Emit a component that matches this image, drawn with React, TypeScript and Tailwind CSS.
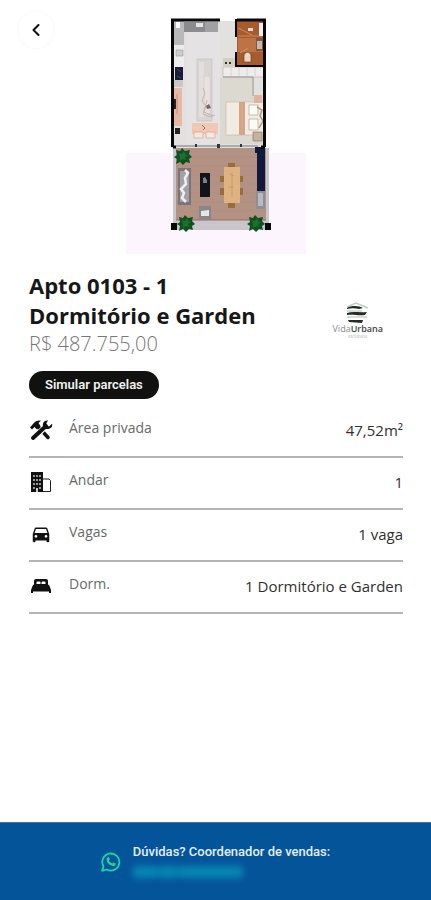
import type { ReactNode } from 'react'
import { MdDirectionsCar } from 'react-icons/md'
import { ChevronLeft } from 'lucide-react'

interface Feature {
  label: string
  value: string
  icon: ReactNode
}

const features: Feature[] = [
  { label: 'Área privada', value: '47,52m²', icon: <ToolsIcon /> },
  { label: 'Andar', value: '1', icon: <BuildingIcon /> },
  { label: 'Vagas', value: '1 vaga', icon: <MdDirectionsCar className="size-[22px]" /> },
  { label: 'Dorm.', value: '1 Dormitório e Garden', icon: <BedIcon /> },
]

function ToolsIcon() {
  return (
    <svg viewBox="0 0 24 24" className="size-6" fill="none" stroke="#111" aria-hidden="true">
      <path d="M1 9.500l3-3.500c2-3 5-4 8-3.500L9.500 5l2 3-3.500 3.500L5.500 9 3 11.500z" fill="#111" stroke="none" />
      <path d="M9 8.500l10 11" strokeWidth="3.500" strokeLinecap="round" />
      <path d="M5 20L17 8" stroke="#fff" strokeWidth="6" />
      <path d="M4 20L17 8" strokeWidth="4" strokeLinecap="round" />
      <path
        d="M19 2.500c-4-.5-6 3-4.800 6 1.300 3 5.800 3.500 8.300.8.700-1 1-2.300.6-3.500L20 8.500 17.500 7V5z"
        fill="#111"
        stroke="none"
      />
    </svg>
  )
}

function BuildingIcon() {
  return (
    <svg viewBox="0 0 20 20" className="size-5" aria-hidden="true">
      <path d="M0 0h12v20H0z" fill="#111" />
      <path
        d="M2 3h2v2H2zM5 3h2v2H5zM8 3h2v2H8zM2 7h2v2H2zM5 7h2v2H5zM8 7h2v2H8zM2 11h2v2H2zM5 11h2v2H5zM8 11h2v2H8zM2 15h2v2H2zM8 15h2v2H8z"
        fill="#999"
      />
      <path d="M12 7h6l1.500 1.500v11H12" fill="#fff" stroke="#222" />
      <path d="M5 16h2v4H5z" fill="#ccc" />
    </svg>
  )
}

function BedIcon() {
  return (
    <svg viewBox="0 0 20 16" className="h-4 w-5" fill="#111" aria-hidden="true">
      <path d="M3 7V3q0-2 2-2h10q2 0 2 2v4z" />
      <path d="M5.500 4.500q0-1 1-1h2q1 0 1 1V6h-4zM10.500 4.500q0-1 1-1h2q1 0 1 1V6h-4z" fill="#fff" />
      <path d="M3 6.500h14q1 0 1.500 1.500l1.500 4v3h-2v-1.500H2V15H0v-3l1.500-4Q2 6.500 3 6.500z" />
    </svg>
  )
}

function Plant({ x, y }: { x: number; y: number }) {
  return (
    <g transform={`translate(${x} ${y})`}>
      <path
        d="M-7-6l4 1 2-3 3 3 5-1-1 4 3 3-3 2 1 4-4-1-3 3-3-3-4 2 1-5-3-2 3-2z"
        fill="#0f5220"
      />
      <path d="M-4-3l3 1 2-3 1 3 3 1-3 2 1 3-3-1-3 2v-3z" fill="#1d7030" />
    </g>
  )
}

function FloorPlan() {
  return (
    <svg
      viewBox="126 18 180 236"
      className="block h-[236px] w-[180px]"
      role="img"
      aria-label="Planta do apartamento"
    >
      <path d="M126 153h180v101H126z" fill="#fcf5fd" />

      {/* living area and bedroom */}
      <path d="M171 19h95v129h-95z" fill="#e3e1e0" />
      <path d="M220 18h15v3h-15z" fill="#fff" />
      <path d="M187 32h33v112h-33z" fill="#e4e2e2" />
      <path d="M220 78h34v22h10v46h-44z" fill="#dcd9d1" />
      <path d="M174 21h10v24h-10z" fill="#b9b9ba" />
      <path d="M176 22h4v6h-4z" fill="#fff" />
      <path d="M184 22h34v10h-34z" fill="#8b8b8e" />
      <path d="M205 22h13v10h-13z" fill="#a1a1a3" />
      <path d="M196 23h7v4h-7z" fill="#e4e4e4" />
      <path d="M174 45h10v22h-10z" fill="#ededee" />
      <path d="M176 50h7v6h-7z" fill="#ccc" stroke="#999" strokeWidth=".6" />
      <path d="M175 67h8v13h-8z" fill="#171b35" />
      <path d="M177 69l4 3m-4 4l4 2" stroke="#4c557b" strokeWidth=".7" />
      <path d="M174 80h9v7h-9z" fill="#c9c7c7" />
      <path d="M174 88h8v38h-8z" fill="#e6b9a5" />
      <path d="M174 99h2v10h-2zM175 128h5v6h-5z" fill="#222" />
      <path d="M177 94v20" stroke="#c08f76" />
      <path d="M197 59h15v62h-15z" fill="#d9d5d5" stroke="#c6c2c2" strokeWidth=".7" />
      <path d="M199 62h5v55h-5z" fill="#e2dede" />
      <path d="M204 76h6v38h-6z" fill="#e8e1de" stroke="#d0c7c4" strokeWidth=".5" />
      <path
        d="M203 88l2 5-3 8 4 5-3 8 7 3 5-2M207 100l-3 12 9 4"
        fill="none"
        stroke="#c3aca0"
        strokeWidth=".8"
      />
      <path d="M206 106l3-2 2 4-4 1z" fill="#75665f" />
      <path d="M192 123h26v11h-26z" fill="#f0c8b3" />
      <path d="M194 132h9v6h-9zM206 132h9v6h-9z" fill="#f8e6dc" stroke="#c69f8a" strokeWidth=".6" />
      <path d="M202 125l3 3-2 2" stroke="#7c5849" fill="none" strokeWidth=".8" />
      <path d="M223 58h12v8h-12z" fill="#d3cfc1" />
      <path d="M225 62h2v2h-2zM229 62h2v2h-2z" fill="#333" />
      <path d="M223 67h41v10h-41z" fill="#efedec" stroke="#b9b5b0" strokeWidth=".7" />
      <path d="M231 68v8m8-8v8m8-8v8m8-8v8" stroke="#c9c4bd" strokeWidth=".6" />
      <path d="M223 77h30v19" fill="none" stroke="#9c9893" />

      {/* bed */}
      <path d="M226 102h38v33h-38z" fill="#f1ece2" stroke="#c1b7a5" strokeWidth=".6" />
      <path d="M239 102h6v33h-6z" fill="#d6a38b" />
      <path d="M249 105h9v10h-9zM249 119h9v11h-9z" fill="#fbfaf8" stroke="#b3a594" strokeWidth=".7" />
      <path d="M257 107l5 3-2 6 3 5-4 7" fill="none" stroke="#ac9582" strokeWidth="1.500" />
      <path d="M254 95h8v8h-8z" fill="#e0b29f" />
      <path d="M253 132h9v9h-9z" fill="#c3b3a0" stroke="#8c7b69" strokeWidth=".7" />

      {/* bathroom */}
      <path d="M237 21h27v44h-27z" fill="#a65c2e" />
      <path d="M238 38h25v14h-25z" fill="#bd7344" />
      <path d="M238 36h24M238 28l14 7M240 53l8-5" stroke="#d09a70" strokeWidth=".8" />
      <path d="M259 23h5v13h-5z" fill="#f3f1ef" />
      <path d="M248 28h5v3h-5z" fill="#ead9ca" />
      <path d="M256 38h7v13h-7z" fill="#7b5b47" />
      <path d="M257 41h5v8h-5z" fill="#c9b8a8" />
      <path d="M244 56c0-5 7-5 7 0v6h-7z" fill="#e7d9c5" stroke="#6d4324" strokeWidth=".7" />
      <path d="M236 37v-17h29v46h-29v-14" fill="none" stroke="#080808" strokeWidth="2" />

      {/* terrace */}
      <path d="M173 148h96v82h-96z" fill="#c8c5cb" />
      <path d="M176 148h90v72h-90z" fill="#b39284" />
      <path
        d="M176 157h90M176 166h90M176 175h90M176 184h90M176 193h90M176 202h90M176 211h90"
        stroke="#a88678"
        strokeWidth=".4"
      />
      <path d="M176 220h90" stroke="#8e7169" />
      <path d="M178 168h13v37h-13z" fill="#77757a" />
      <path d="M180 171h9v31h-9z" fill="#a3a1a4" />
      <path d="M185 170l3 3-3 5 1 6-5 5 3 4-2 5 4 4" fill="none" stroke="#f2f0ee" strokeWidth="2.500" />
      <path d="M200 173h10v24h-10z" fill="#11141a" />
      <path d="M203 178l2-1 2 3v3h-4z" fill="#798086" />
      <path d="M228 163h7v45h-7zM220 176h23v6h-23zM220 188h23v7h-23z" fill="#996c3c" />
      <path d="M224 167h16v36h-16z" fill="#dfb381" />
      <path d="M232 172v25M229 174l5 2M229 187h5" stroke="#b98d5f" strokeWidth=".6" />
      <path d="M255 147h10v44h-8v-38h-2z" fill="#111a3d" />
      <path d="M256 191h9v18h-9z" fill="#8c8e99" />
      <path d="M258 193h5v13h-5z" fill="#b7bac3" />
      <path d="M199 206h12v13h-12z" fill="#87868b" />
      <path d="M201 211l8-1v6h-8z" fill="#e7e7ea" />

      {/* outer walls */}
      <path
        d="M220 20h-47.500v127M237 20h27.500v127M173 147h3M261 147h4"
        fill="none"
        stroke="#090909"
        strokeWidth="3"
      />
      <path d="M176 144h82v3h-82z" fill="#dfe2df" />
      <path d="M176 146h82" stroke="#74777a" />
      <path d="M195 144h2v3h-2zM217 144h3v4h-3zM240 144h2v3h-2z" fill="#32363a" />
      <path d="M171 223h6v7h-6zM265 223h6v7h-6z" fill="#090909" />
      <Plant x={183} y={156} />
      <Plant x={186} y={223} />
      <Plant x={256} y={223} />
    </svg>
  )
}

function Logo() {
  return (
    <div className="flex flex-col items-center">
      <svg viewBox="15 0 27 22" className="h-[22px] w-[27px]" aria-hidden="true">
        <path d="M18 6l9-4 12 5" fill="none" stroke="#b8cfc1" strokeWidth="1.500" />
        <path
          d="M18 7c5-3 13-2 16 0l-4 1c-4-1-8-1-12 0zM18 12c6-2 12 0 20-1l-2 3c-7 1-12-1-18 0zM19 19h15l-1 3-13-1z"
          fill="#262b28"
        />
        <path d="M18 10h15M18 16h20" stroke="#8aa194" strokeWidth=".7" />
      </svg>
      <span className="text-[9px] leading-[11px] text-[#8b8b8b]">
        Vida<span className="font-semibold text-[#444]">Urbana</span>
      </span>
      <span className="text-[4px] leading-[5px] text-[#9aa7a0]">ESTÚDIOS</span>
    </div>
  )
}

function WhatsAppIcon() {
  return (
    <svg viewBox="0 0 20 20" className="size-5 shrink-0" aria-hidden="true">
      <path
        d="M1.200 18.800l1.300-4.500A8.500 8.500 0 1 1 5.800 17.500z"
        fill="none"
        stroke="#19d8a3"
        strokeWidth="1.800"
        strokeLinejoin="round"
      />
      <path
        d="M6.700 5.300c.5-.4 1.100-.4 1.400.2l.7 1.700-.9 1.300c.8 1.500 2 2.500 3.500 3.100l1.200-1.200 2.100 1c.3 1.600-1.200 2.800-2.800 2.600-3.700-.7-6.100-3.300-6.400-6.400 0-.9.500-1.700 1.200-2.300z"
        fill="#19d8a3"
      />
    </svg>
  )
}

export default function App() {
  return (
    <div className="flex min-h-screen flex-col bg-white font-['Open_Sans',sans-serif] text-[#171717]">
      <header className="relative flex justify-center pt-[18px]">
        <button
          type="button"
          aria-label="Voltar"
          className="absolute top-3 left-[18px] flex size-9 items-center justify-center rounded-full bg-white text-[#111] shadow-[0_0_3px_rgba(0,0,0,0.06)]"
        >
          <ChevronLeft className="size-5" strokeWidth={2.5} />
        </button>
        <FloorPlan />
      </header>

      <main className="pt-4 pr-7 pl-[29px]">
        <div className="flex items-center justify-between">
          <div>
            <h1 className="w-60 text-[22px] leading-[30px] font-bold">
              Apto 0103 - 1 Dormitório e Garden
            </h1>
            <p className="text-xl leading-7 font-light text-[#777]">R$ 487.755,00</p>
          </div>
          <div className="mt-3 mr-5">
            <Logo />
          </div>
        </div>

        <button
          type="button"
          className="mt-[13px] flex h-7 items-center rounded-full bg-[#11110f] px-4 font-[Roboto,sans-serif] text-[13px] font-semibold text-[#f2f2f2]"
        >
          Simular parcelas
        </button>

        <dl className="mt-[7px]">
          {features.map((f) => (
            <div
              key={f.label}
              className="flex h-[52px] items-center border-b-2 border-[#b5b5b5] pb-0.5"
            >
              <dt className="flex items-center text-sm leading-5 text-[#666b6a]">
                <span className="mr-4 flex w-6 justify-center text-[#111]">{f.icon}</span>
                <span className="pb-1">{f.label}</span>
              </dt>
              <dd className="ml-auto text-[15px] leading-5 text-[#303030]">{f.value}</dd>
            </div>
          ))}
        </dl>
      </main>

      <footer className="mt-auto flex h-[78px] items-center justify-center border-t border-[#456f9d] bg-[#04549a] font-[Roboto,sans-serif]">
        <a href="#contato" className="flex items-center gap-3">
          <WhatsAppIcon />
          <span className="text-[13px] leading-5 font-medium text-[#e3eefa]">
            Dúvidas? Coordenador de vendas:
            {/* contact name stays obscured */}
            <span className="flex h-5 items-center gap-px blur-[3px]" aria-hidden="true">
              <span className="h-3 w-6 bg-[#0785b3]" />
              <span className="h-3 w-5 bg-[#0785b3]" />
              <span className="h-3 w-16 bg-[#0785b3]" />
            </span>
          </span>
        </a>
      </footer>
    </div>
  )
}
